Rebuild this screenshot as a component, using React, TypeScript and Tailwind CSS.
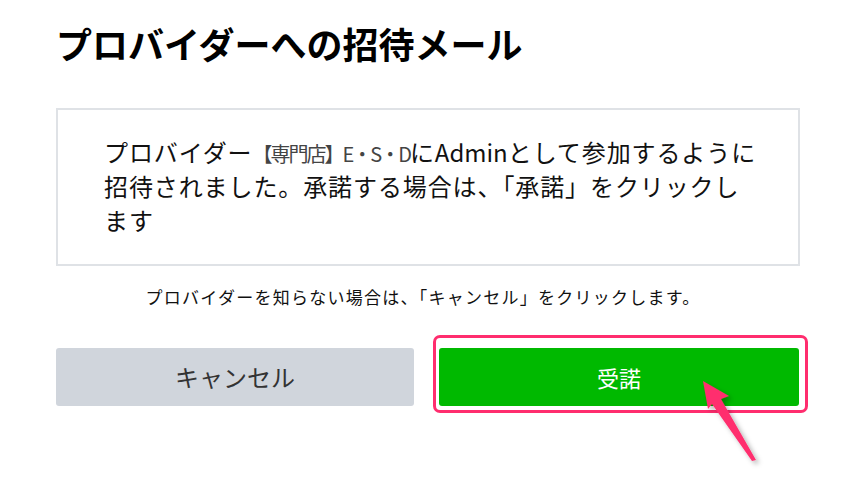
import React from 'react'

const jp = { fontFamily: '"Noto Sans CJK JP", "Noto Sans", sans-serif' }

export default function App() {
    return (
        <div className="relative w-[865px] h-[481px] bg-white overflow-hidden text-[#111]" style={jp}>
            <div className="pl-[56px] w-[800px]">
                {/* Title */}
                <h1 className="mt-[16px] text-[36px] leading-[54px] font-bold text-black whitespace-nowrap">
                    プロバイダーへの招待メール
                </h1>

                {/* Message box */}
                <div className="mt-[38px] border-2 border-[#dfe2e6] pt-[25px] pb-[27px] pl-[46px] pr-[20px]">
                    <p className="text-[24px] leading-[34px] tracking-[0.9px] whitespace-nowrap">
                        プロバイダー<span className="text-[#444] text-[20px] leading-none tracking-[-2px]">【専門店】E・S・D</span>に<span className="tracking-[0px]">Admin</span>として参加するように
                        <br />
                        招待されました。承諾する場合は、「承諾」をクリックし
                        <br />
                        ます
                    </p>
                </div>

                {/* Note */}
                <p className="mt-[19px] text-center text-[17px] leading-[24px] tracking-[1.25px] pr-[10px] whitespace-nowrap">
                    プロバイダーを知らない場合は、「キャンセル」をクリックします。
                </p>

                {/* Buttons */}
                <div className="mt-[39px] flex gap-[25px]">
                    <button className="w-[358px] h-[58px] rounded-[3px] bg-[#d0d5dc] text-[#333] text-[24px]">
                        キャンセル
                    </button>
                    <div className="relative">
                        <button className="w-[360px] h-[58px] rounded-[3px] bg-[#00b900] text-white text-[22px]">
                            受諾
                        </button>
                        {/* highlight annotation */}
                        <span className="absolute -top-[13px] -left-[6px] -right-[9px] -bottom-[7px] border-[3px] border-[#ff2d6e] rounded-[7px] pointer-events-none" />
                    </div>
                </div>
            </div>

            {/* Arrow annotation */}
            <svg className="absolute left-0 top-0 pointer-events-none" width="865" height="481" viewBox="0 0 865 481">
                <defs>
                    <filter id="sh" x="-50%" y="-50%" width="200%" height="200%">
                        <feDropShadow dx="3" dy="3" stdDeviation="2.5" floodColor="#000" floodOpacity="0.3" />
                    </filter>
                </defs>
                <path
                    d="M703 381 L729 396 L721 399 L756 460 L752 461 L712 404 L708 409 Z"
                    fill="#ff2d6e"
                    filter="url(#sh)"
                />
            </svg>
        </div>
    )
}
